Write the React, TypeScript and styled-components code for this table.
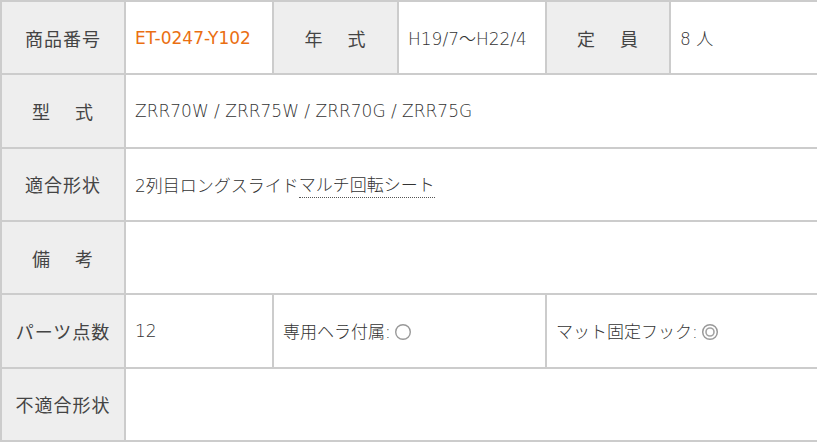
import React from "react";
import styled, { createGlobalStyle } from "styled-components";

const Global = createGlobalStyle`
  html, body { margin: 0; padding: 0; background: #fff; }
  body { font-family: "Noto Sans CJK JP", "Liberation Sans", sans-serif; }
`;

const Table = styled.div`
  display: grid;
  grid-template-columns: 124px 148px 125px 148px 124px 148px;
  grid-template-rows: repeat(6, 1fr);
  width: 817px;
  height: 442px;
  box-sizing: border-box;
  border: 1px solid #cccccc;
`;

const Cell = styled.div<{ $span?: number }>`
  grid-column: span ${(p) => p.$span ?? 1};
  box-sizing: border-box;
  border: 1px solid #cccccc;
  display: flex;
  align-items: center;
  min-width: 0;
`;

const Label = styled(Cell)`
  background: #eeeeee;
  justify-content: center;
  color: #444444;
  font-size: 18px;
  letter-spacing: 1px;
  white-space: pre;
`;

const Value = styled(Cell)<{ $accent?: boolean }>`
  background: #ffffff;
  padding-left: 9px;
  color: ${(p) => (p.$accent ? "#ea6f12" : "#333333")};
  font-family: "DejaVu Sans", "Noto Sans CJK JP", sans-serif;
  font-weight: ${(p) => (p.$accent ? 400 : 300)};
  font-size: 17px;
  white-space: pre;
`;

const Dotted = styled.span`
  border-bottom: 1px dotted #555555;
  padding-bottom: 1px;
`;

const Mark = styled.svg`
  flex: none;
  width: 18px;
  height: 18px;
  margin-left: 3px;
  margin-top: 3px;
`;

const Circle = () => (
  <Mark viewBox="0 0 18 18">
    <circle cx="9" cy="9" r="7.3" fill="none" stroke="#999999" strokeWidth="1.4" />
  </Mark>
);

const DoubleCircle = () => (
  <Mark viewBox="0 0 18 18">
    <circle cx="9" cy="9" r="7.3" fill="none" stroke="#999999" strokeWidth="1.5" />
    <circle cx="9" cy="9" r="4" fill="none" stroke="#a3a3a3" strokeWidth="1.6" />
  </Mark>
);

export default function App() {
  return (
    <>
      <Global />
      <Table>
        <Label>商品番号</Label>
        <Value $accent>ET-0247-Y102</Value>
        <Label>年　 式</Label>
        <Value>H19/7～H22/4</Value>
        <Label>定　 員</Label>
        <Value>8 人</Value>

        <Label>型　 式</Label>
        <Value $span={5}>ZRR70W / ZRR75W / ZRR70G / ZRR75G</Value>

        <Label>適合形状</Label>
        <Value $span={5}>
          2列目ロングスライド<Dotted>マルチ回転シート</Dotted>
        </Value>

        <Label>備　 考</Label>
        <Value $span={5}></Value>

        <Label>パーツ点数</Label>
        <Value>12</Value>
        <Value $span={2}>
          専用ヘラ付属:<Circle />
        </Value>
        <Value $span={2}>
          マット固定フック:<DoubleCircle />
        </Value>

        <Label>不適合形状</Label>
        <Value $span={5}></Value>
      </Table>
    </>
  );
}
